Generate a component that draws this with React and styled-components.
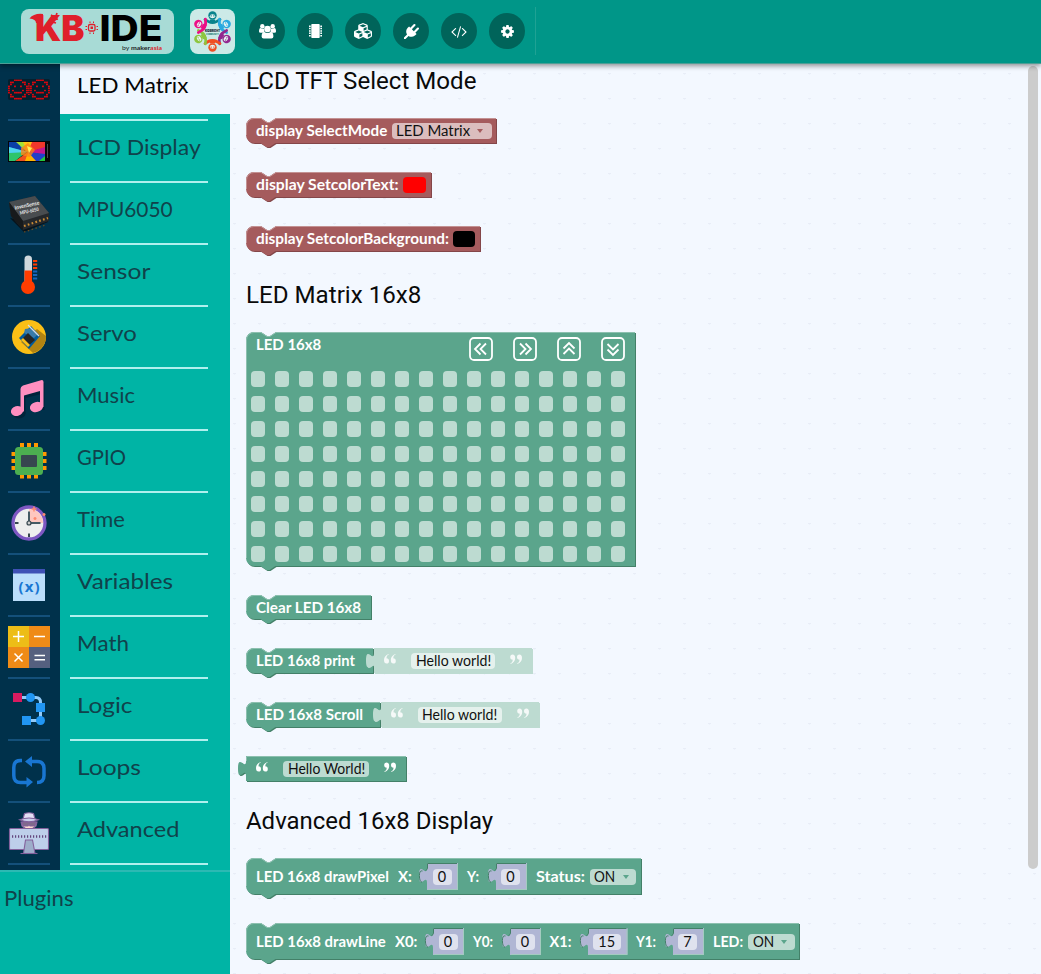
import React, { useLayoutEffect, useRef, useState } from "react";
import styled, { createGlobalStyle } from "styled-components";
import { FaCubes } from "react-icons/fa";

const GlobalStyle = createGlobalStyle`
  html, body { margin: 0; padding: 0; overflow: hidden; background: #f3f8ff; }
  * { box-sizing: border-box; }
`;

const FONT = `Lato, "Open Sans", sans-serif`;

const Page = styled.div`
  display: flex;
  flex-direction: column;
  width: 1041px;
  height: 974px;
  overflow: hidden;
  font-family: ${FONT};
`;

/* ---------- fitted text ---------- */

const FitBox = styled.span`
  display: block;
  flex: none;
  width: ${(p) => p.$w}px;
  white-space: pre;
`;

const FitInner = styled.span`
  display: inline-block;
  transform-origin: 0 50%;
`;

/* Widens or narrows the glyphs so that the text fills exactly w pixels. */
function Fit({ w, children }) {
  const ref = useRef(null);
  const [scale, setScale] = useState(1);
  useLayoutEffect(() => {
    setScale(w / ref.current.offsetWidth);
  }, [w, children]);
  return (
    <FitBox $w={w}>
      <FitInner ref={ref} style={{ transform: `scaleX(${scale})` }}>{children}</FitInner>
    </FitBox>
  );
}

/* ---------- header ---------- */

const Header = styled.header`
  flex: none;
  display: flex;
  align-items: flex-start;
  height: 64px;
  padding: 7px 0 0 21px;
  background: #009688;
  border-bottom: 1px solid #4d9e96;
  box-shadow: 0 2px 5px rgba(0, 0, 0, 0.42);
  position: relative;
  z-index: 2;
`;

const LogoCard = styled.div`
  width: ${(p) => p.$w}px;
  height: 45px;
  margin: 2px ${(p) => p.$gap}px 0 0;
  border-radius: 8px;
  background: rgba(255, 255, 255, ${(p) => p.$alpha});
  svg { display: block; overflow: visible; }
`;

const ToolButton = styled.button`
  display: flex;
  align-items: center;
  justify-content: center;
  width: 36px;
  height: 36px;
  margin: 6px 12px 0 0;
  padding: 0;
  border: 0;
  border-radius: 50%;
  background: #00645a;
  color: #fff;
`;

const HeaderRule = styled.div`
  width: 1px;
  height: 48px;
  margin-left: -2px;
  background: #1fa294;
`;

function BrandLogo() {
  return (
    <svg width="153" height="45" viewBox="21 9 153 45">
      <g fontFamily="Inter, 'Liberation Sans', sans-serif" fontWeight="900" fontSize="36">
        <text x="35" y="40.5" fill="#df1f2b" textLength="49.5" lengthAdjust="spacingAndGlyphs">KB</text>
        <text x="99.500" y="40.5" fill="#000" textLength="63" lengthAdjust="spacingAndGlyphs" fontWeight="800">IDE</text>
      </g>
      <path d="M29.500 18.500Q34 13 43 14v9h-7q0-4-6.500-4.500z" fill="#df1f2b" />
      <g stroke="#df1f2b" fill="none">
        <path d="M51 15l3 2m3-4l-2 6m-3 1l6-1m-6 3l4 1" strokeWidth="1.700" />
        <rect x="88.500" y="24.500" width="6.500" height="6.500" rx="1.500" strokeWidth="1.300" />
        <path d="M90 23v-1.500m3.500 1.500v-1.500M90 32.500v1.500m3.500-1.500v1.500M87 26.500h-1.500m1.500 3h-1.500m11-3h1.500m-1.500 3h1.500" strokeWidth="1" />
      </g>
      <rect x="90.500" y="26.500" width="2.500" height="2.500" fill="#df1f2b" />
      <text x="122" y="49.800" fontFamily="Lato, sans-serif" fontSize="6.400" fill="#222" textLength="40" lengthAdjust="spacingAndGlyphs">
        by <tspan fontWeight="700">maker</tspan><tspan fontWeight="700" fill="#df1f2b">asia</tspan>
      </text>
    </svg>
  );
}

const PEOPLE = [
  [0, "#08838c"],
  [62, "#29a9e0"],
  [118, "#92278f"],
  [180, "#f04e23"],
  [242, "#8dc63f"],
  [298, "#ec0f86"],
];

function CommunityLogo() {
  return (
    <svg width="45" height="45" viewBox="-22.500 -22.500 45 45">
      {PEOPLE.map(([a, c]) => (
        <g key={c} transform={`rotate(${a})`}>
          <path d="M-7.500-12Q0-6 7.500-12" fill="none" stroke={c} strokeWidth="2.800" strokeLinecap="round" />
          <path d="M-2.500-12h5l.5 4h-6z" fill={c} />
          <circle cy="-16" r="4.200" fill={c} />
          <ellipse cy="-15.200" rx="2.700" ry="2" fill="#e6f3f1" />
          <path d="M-2-15.600h1.500m1 0h1.500" stroke={c} strokeWidth="0.900" />
        </g>
      ))}
      <text y="0" textAnchor="middle" fontFamily="Inter, sans-serif" fontWeight="900" fontSize="3.600" textLength="15" lengthAdjust="spacingAndGlyphs" fill="#123">KIDBRIGHT</text>
      <text y="3.600" textAnchor="middle" fontFamily="Inter, sans-serif" fontWeight="700" fontSize="2.400" textLength="13" lengthAdjust="spacingAndGlyphs" fill="#0a6d66">COMMUNITY</text>
    </svg>
  );
}

const UsersIcon = () => (
  <svg width="17" height="15" viewBox="0 0 17 15" fill="#fff">
    <circle cx="3.300" cy="2.300" r="2.200" />
    <circle cx="13.700" cy="2.300" r="2.200" />
    <path d="M0 7.500Q0 4 1.500 4q2 1.200 3.500.4Q4.600 7 6 8.200L4 8.800H1.500Q0 8.800 0 7.500zM17 7.500Q17 4 15.500 4q-2 1.200-3.500.4Q12.400 7 11 8.200l2 .6h2.500Q17 8.800 17 7.500z" />
    <circle cx="8.500" cy="5" r="3.300" />
    <path d="M2.600 12.500Q2.600 8 5.300 8q3.200 2.200 6.400 0 2.700 0 2.700 4.500 0 2-2 2H4.600q-2 0-2-2z" />
  </svg>
);

const ChipIcon = () => (
  <svg width="13" height="14" viewBox="0 0 13 14" fill="#fff">
    <rect x="2.300" width="8.400" height="14" rx="0.800" />
    {[1.4, 3.8, 6.2, 8.6, 11].map((y) => (
      <path key={y} d={`M0 ${y}h1.700v1.500H0zM11.300 ${y}H13v1.500h-1.700z`} />
    ))}
  </svg>
);

const PlugIcon = () => (
  <svg width="15" height="15" viewBox="0 0 1792 1792" fill="#fff">
    <path d="M1755 453q37 38 37 90.500t-37 90.500l-401 400 150 150-160 160q-163 163-389.500 186.500t-411.500-100.500l-362 362h-181v-181l362-362q-124-185-100.500-411.500t186.500-389.500l160-160 150 150 400-401q38-37 91-37t90 37 37 90.500-37 90.500l-400 401 234 234 401-400q38-37 91-37t90 37z" />
  </svg>
);

const CodeIcon = () => (
  <svg width="16" height="15" viewBox="0 0 1920 1792" fill="#fff">
    <path d="M617 1399l-50 50q-10 10-23 10t-23-10l-466-466q-10-10-10-23t10-23l466-466q10-10 23-10t23 10l50 50q10 10 10 23t-10 23l-393 393 393 393q10 10 10 23t-10 23zm591-1067l-373 1291q-4 13-15.500 19.500t-23.500 2.500l-62-17q-13-4-19.500-15.500t-2.500-24.500l373-1291q4-13 15.500-19.500t23.500-2.500l62 17q13 4 19.500 15.500t2.500 24.500zm657 651l-466 466q-10 10-23 10t-23-10l-50-50q-10-10-10-23t10-23l393-393-393-393q-10-10-10-23t10-23l50-50q10-10 23-10t23 10l466 466q10 10 10 23t-10 23z" />
  </svg>
);

const CogIcon = () => (
  <svg width="15" height="15" viewBox="0 0 1792 1792" fill="#fff">
    <path d="M1152 896q0-106-75-181t-181-75-181 75-75 181 75 181 181 75 181-75 75-181zm512-109v222q0 12-8 23t-20 13l-185 28q-19 54-39 91 35 50 107 138 10 12 10 25t-9 23q-27 37-99 108t-94 71q-12 0-26-9l-138-108q-44 23-91 38-16 136-29 186-7 28-36 28h-222q-14 0-24.500-8.500t-11.500-21.500l-28-184q-49-16-90-37l-141 107q-10 9-25 9-14 0-25-11-126-114-165-168-7-10-7-23 0-12 8-23 15-21 51-66.500t54-70.500q-27-50-41-99l-183-27q-13-2-21-12.500t-8-23.500v-222q0-12 8-23t19-13l186-28q14-46 39-92-40-57-107-138-10-12-10-24 0-10 9-23 26-36 98.500-107.500t94.500-71.500q13 0 26 10l138 107q44-23 91-38 16-136 29-186 7-28 36-28h222q14 0 24.500 8.500t11.500 21.500l28 184q49 16 90 37l142-107q9-9 24-9 13 0 25 10 129 119 165 170 7 8 7 22 0 12-8 23-15 21-51 66.500t-54 70.500q26 50 41 98l183 28q13 2 21 12.500t8 23.500z" />
  </svg>
);

/* ---------- sidebar ---------- */

const Body = styled.div`
  flex: 1;
  display: flex;
  min-height: 0;
`;

const Sidebar = styled.nav`
  flex: none;
  width: 230px;
  background: #00b4a5;
`;

const Category = styled.div`
  display: flex;
  height: ${(p) => (p.$first ? 57 : 62)}px;
`;

const RailCell = styled.div`
  flex: none;
  display: flex;
  flex-direction: column;
  justify-content: flex-end;
  width: 60px;
  padding: 0 10px 0 8px;
  background: #00314b;
  &::after { content: ""; height: 2px; background: #14507a; flex: none; }
`;

const RailIcon = styled.div`
  height: 60px;
  flex: none;
  svg { display: block; overflow: visible; }
`;

const LabelCell = styled.div`
  flex: 1;
  display: flex;
  flex-direction: column;
  justify-content: space-between;
  &::after { content: ""; height: 2px; width: 138px; margin-left: 10px; background: #b0f0ee; }
`;

const Label = styled.div`
  height: ${(p) => (p.$on ? 50 : 55)}px;
  padding: ${(p) => (p.$on ? 8 : 13)}px 0 0 16.500px;
  font-size: 21.500px;
  line-height: 27px;
  color: ${(p) => (p.$on ? "#050505" : "#10424b")};
  background: ${(p) => (p.$on ? "#eff7ff" : "transparent")};
`;

const RailEnd = styled.div`
  width: 60px;
  height: 5px;
  background: #00314b;
`;

const Plugins = styled.div`
  border-top: 2px solid #2cb9b3;
  padding: 13px 0 0 4px;
  font-size: 21.500px;
  line-height: 27px;
  color: #10424b;
`;

const FACE = [
  "0001111000",
  "0110000110",
  "0100000010",
  "1001001001",
  "1000000001",
  "1010000101",
  "1001111001",
  "0100000010",
  "0110000110",
  "0001111000",
];

/* Every drawing uses a 42x60 box that ends at the separator line. */
const Pic = ({ children }) => (
  <svg width="42" height="60" viewBox="0 0 42 60">{children}</svg>
);

const ICONS = {
  matrix: (
    <Pic>
      <rect y="20" width="42" height="21" rx="2" fill="#03202f" />
      {[0, 22].map((dx) =>
        FACE.map((row, j) =>
          [...row].map((v, i) =>
            v === "1" ? (
              <rect key={`${dx}-${j}-${i}`} x={dx + 0.1 + i * 2} y={20.400 + j * 2.050} width="1.700" height="1.700" rx="0.500" fill="#f8050b" />
            ) : null
          )
        )
      )}
      <path d="M20.900 24v12" stroke="#f2050b" strokeWidth="1.500" strokeDasharray="1.500 .7" />
    </Pic>
  ),
  lcd: (
    <Pic>
      <rect y="20" width="42" height="21" fill="#050608" />
      <path d="M1 21h12l3 9-8 9H1z" fill="#2389d8" />
      <path d="M1 21l9 0 5 9-14-4z" fill="#0a3fa5" />
      <path d="M8 21h11l0 10z" fill="#a6e034" />
      <path d="M15 21h10l-5 11z" fill="#ffc516" />
      <path d="M24 21h13v6l-17 4z" fill="#f2382b" />
      <path d="M37 26v8L20 31z" fill="#c4168e" />
      <path d="M37 33v7H26l-6-9z" fill="#2140c9" />
      <path d="M28 40H16l4-9z" fill="#ffb400" />
      <path d="M17 40H7l13-9z" fill="#f0521e" />
      <path d="M7 40H1v-8l19-2z" fill="#2ec56a" />
      <path d="M1 32v-6l19 5z" fill="#4fd5ed" />
      <path d="M31 40h6v-5z" fill="#24c83c" />
      <path d="M13 27l7-5 7 7-5 7-9-2z" fill="#ff8418" opacity=".8" />
      <path d="M19 25l5 2-3 5z" fill="#fff05a" />
      <path d="M39.500 23v14" stroke="#555" strokeWidth="0.900" />
    </Pic>
  ),
  mpu: (
    <Pic>
      <path d="M2 35l14 14 24-10v-5L14 38z" fill="#07131b" />
      <path d="M1 19L27 13 41 30v8L15 47 3 33z" fill="#25282b" />
      <path d="M1 19L27 13 41 30 15 38z" fill="#494d50" />
      <path d="M1 19l14 19v9L3 33z" fill="#171a1c" />
      <path d="M16 43l24-8" stroke="#c98a35" strokeWidth="2.200" strokeDasharray="1.700 2.300" />
      <path d="M16 49l22-7" stroke="#6b4c22" strokeWidth="1.300" strokeDasharray="1.500 2.500" />
      <g fontFamily="Lato, sans-serif" fontWeight="700" fill="#ededed" transform="rotate(-12 20 25)">
        <text x="7" y="24" fontSize="5.500" textLength="25" lengthAdjust="spacingAndGlyphs">InvenSense</text>
        <text x="11" y="30" fontSize="5" textLength="19" lengthAdjust="spacingAndGlyphs">MPU-6050</text>
      </g>
    </Pic>
  ),
  sensor: (
    <Pic>
      <g transform="translate(0 -2)">
        <rect x="16.500" y="12.500" width="7.500" height="32" rx="3.750" fill="#cfd8dc" />
        <path d="M16.500 27.500H24V40h-7.500z" fill="#ff3d00" />
        <circle cx="20" cy="44" r="7" fill="#ff3d00" />
        <path d="M25 18h4.200M25 21.500h4.200M25 25h4.200" stroke="#ff3d00" strokeWidth="2" />
        <path d="M25 28.500h4.200M25 32h4.200M25 35.500h4.200" stroke="#1565c0" strokeWidth="2" />
      </g>
    </Pic>
  ),
  servo: (
    <Pic>
      <g transform="translate(0 -2)">
        <circle cx="21" cy="32" r="17" fill="#fbbf16" />
        <path d="M29 24l9 7a17 17 0 0 1-13 17L13 37z" fill="#b28412" />
        <path d="M11 33l12-12 9 10-11 13z" fill="#015a9b" />
        <path d="M17 24l7-1 6 6-4 4-10-5z" fill="#397ba9" />
        <path d="M14 34l6-6 7 7-7 6z" fill="#252525" />
        <path d="M14 34l7 7" fill="none" stroke="#fbbf16" strokeWidth="2.800" />
        <path d="M20 20l11 11" stroke="#ddd" strokeWidth="1.300" />
      </g>
    </Pic>
  ),
  music: (
    <Pic>
      <g transform="translate(1.500 2)" fill="#001d33" opacity=".65">
        <ellipse cx="9.500" cy="42.500" rx="6.500" ry="5" />
        <path d="M13 19Q14 15 35 12v27h-3V23l-16 4v16h-3z" />
      </g>
      <g fill="#ff8fc0">
        <ellipse cx="9" cy="42" rx="6.200" ry="4.900" transform="rotate(-15 9 42)" />
        <ellipse cx="28.500" cy="38" rx="6.700" ry="5" transform="rotate(-15 28.500 38)" />
        <path d="M12.500 42.500V20q0-2.500 2.500-3.500l18-5.300q2.500-.5 2.500 1.800v25h-3.500V22L16 26.500V42.500z" />
      </g>
    </Pic>
  ),
  gpio: (
    <Pic>
      <g transform="translate(0 -2)">
        <g fill="#ff9800">
          {[12, 19, 26].map((x) => <path key={x} d={`M${x} 14h4v5h-4zM${x} 44h4v5.500h-4z`} />)}
          {[23, 30, 37].map((y) => <path key={y} d={`M3.500 ${y}h5v4h-5zM34 ${y}h4.500v4H34z`} />)}
        </g>
        <rect x="7" y="18" width="28" height="28" rx="3.500" fill="#4caf50" />
        <rect x="13" y="26" width="16" height="12" rx="1" fill="#37474f" />
      </g>
    </Pic>
  ),
  time: (
    <Pic>
      <g transform="translate(0 -2)">
        <circle cx="21" cy="32" r="16" fill="#eee" stroke="#7e57c2" strokeWidth="3.300" />
        <path d="M21 18v14h14A14 14 0 0 0 21 18z" fill="#ffc7bf" />
        <path d="M21 20.500V32h11.500" fill="none" stroke="#455a64" strokeWidth="2" />
        <path d="M7 32h3.500M21 42.500V46" stroke="#37474f" strokeWidth="2" />
        <circle cx="21" cy="32" r="2" fill="#ccc" stroke="#37474f" strokeWidth="1.200" />
        <path d="M26 15.500v5m-2.500-2.500h5M27 26v3m-1.500-1.500h3M36 22v3m-1.500-1.500h3" stroke="#ff8a70" strokeWidth="1.500" />
      </g>
    </Pic>
  ),
  vars: (
    <Pic>
      <g transform="translate(0 -2)">
        <rect x="5" y="16" width="32" height="32" fill="#bbdefb" />
        <path d="M5 16h32v4.500H5z" fill="#3f51b5" />
        <text x="21" y="38.500" textAnchor="middle" fontFamily="'Open Sans', sans-serif" fontWeight="700" fontSize="15" textLength="21" lengthAdjust="spacing" fill="#1976d2">(x)</text>
      </g>
    </Pic>
  ),
  math: (
    <Pic>
      <path d="M0 9h21v21H0z" fill="#edbd17" />
      <path d="M21 9h21v21H21zM0 30h21v21H0z" fill="#ef8b17" />
      <path d="M21 30h21v21H21z" fill="#55607f" />
      <path d="M5 19.500h11M10.500 14v11M26 19.500h11M6.500 36.500l8 8m0-8l-8 8M26.500 38.500h10.500m-10.500 4.300h10.500" stroke="#fff" strokeWidth="1.500" />
    </Pic>
  ),
  logic: (
    <Pic>
      <path d="M10 18.500h18q4.500 0 4.500 5v18H18" fill="none" stroke="#90caf9" strokeWidth="3" />
      <path d="M5 14h9v9H5z" fill="#d81b60" />
      <circle cx="22.500" cy="18.500" r="4.500" fill="#2196f3" />
      <circle cx="32.500" cy="41.500" r="4.500" fill="#2196f3" />
      <path d="M28 24h9v9h-9zM14 37h9v9h-9z" fill="#2196f3" />
    </Pic>
  ),
  loops: (
    <Pic>
      <path d="M14 19.500h-1.500q-6.700 0-6.700 7v8q0 7 6.700 7H20M22 20.500h7q7 0 7 7v7q0 7-7 7" fill="none" stroke="#1976d2" strokeWidth="3.500" />
      <path d="M24 15v11l-7-5.500zM18.500 36v10.500L25 41z" fill="#1976d2" />
    </Pic>
  ),
  advanced: (
    <Pic>
      <g stroke="#83619c" strokeWidth="1.100">
        <path d="M13 19h16l-1 4q-7 7-14 0z" fill="#ffdccf" />
        <path d="M14 19h14l-1 4h-5l-1-1.500-1 1.500h-5z" fill="#806a8c" />
        <path d="M16.500 10.500q4.500-1.500 9 0l1.500 5.500H15z" fill="#e4dff5" />
        <path d="M11.500 16.800q9.500-3.500 19 0-9.500 4-19 0z" fill="#cbd0ec" />
        <rect x="1.500" y="25.500" width="39" height="21" rx="1" fill="#becfea" />
        <path d="M17.500 37h7l2.500 13.500H15.500z" fill="#9eadca" />
        <path d="M12.500 50.500h17" />
      </g>
      <path d="M4 33.500h35" stroke="#63467c" strokeWidth="2.400" strokeDasharray="1.200 1.800" />
    </Pic>
  ),
};

const CATEGORIES = [
  ["matrix", "LED Matrix", 111.5],
  ["lcd", "LCD Display", 124],
  ["mpu", "MPU6050", 96],
  ["sensor", "Sensor", 73],
  ["servo", "Servo", 60],
  ["music", "Music", 58.500],
  ["gpio", "GPIO", 49],
  ["time", "Time", 48],
  ["vars", "Variables", 96],
  ["math", "Math", 52],
  ["logic", "Logic", 55.500],
  ["loops", "Loops", 64],
  ["advanced", "Advanced", 102],
];

/* ---------- workspace ---------- */

const Workspace = styled.main`
  flex: 1;
  display: flex;
  justify-content: space-between;
  padding: 0 3px 0 16px;
  background-color: #f3f8ff;
  background-image: radial-gradient(ellipse 2px 1.100px at 4.500px 9.600px, #e8edf7 0, #e8edf7 60%, transparent 100%);
  background-size: 25px 25px;
`;

const Flyout = styled.div`
  display: flex;
  flex-direction: column;
  align-items: flex-start;
`;

const ScrollThumb = styled.div`
  width: 10px;
  height: 803px;
  margin-top: 2px;
  border-radius: 5px;
  background: #ccc;
`;

const Heading = styled.h2`
  margin: ${(p) => p.$mt}px 0 0;
  height: 28px;
  font: 400 24px/28px Roboto, sans-serif;
  color: #0a0a0a;
`;

const TONES = {
  red: { fill: "#a55b5d", light: "#c39293", dark: "#844649", soft: "#dbbdbe" },
  green: { fill: "#5ba58c", light: "#8cc0af", dark: "#438068", soft: "#bddbd1" },
  ghost: { fill: "#bddbd1", light: "#bddbd1", dark: "#bddbd1", soft: "#e5f1ed" },
};

const BlockBox = styled.div`
  position: relative;
  flex: none;
  display: flex;
  align-items: ${(p) => (p.$top ? "flex-start" : "center")};
  width: ${(p) => p.$w}px;
  height: ${(p) => p.$h}px;
  margin-top: ${(p) => p.$mt || 0}px;
  margin-left: ${(p) => p.$ml || 0}px;
  padding-left: ${(p) => p.$pad}px;
`;

const Shape = styled.svg`
  position: absolute;
  left: 0;
  top: 0;
  overflow: visible;
`;

const stackPath = (w, h) =>
  `M0 8A8 8 0 0 1 8 0H15l6 4h3l6-4H${w}V${h}H29.500l-6 4h-3l-6-4H8A8 8 0 0 1 0 ${h - 8}z`;
const valuePath = (w, h) => `M0 0H${w}V${h}H0V20c0-10-8 8-8-7.500s8 2.500 8-7.500z`;

function Block({ tone = "green", kind = "stack", w, h = 26, mt, ml, pad = 9.5, top, children }) {
  const t = TONES[tone];
  const d = kind === "stack" ? stackPath(w - 1, h - 1) : valuePath(w - 1, h - 1);
  const edge =
    kind === "stack"
      ? `M.5 ${h - 9}V8A7.500 7.500 0 0 1 8 .5H15l6 4h3l6-4H${w - 1}`
      : `M.5 5V.5H${w - 1}`;
  return (
    <BlockBox $w={w} $h={h} $mt={mt} $ml={ml} $pad={pad} $top={top}>
      <Shape width={w} height={h}>
        <path d={d} fill={t.dark} transform="translate(1 1)" />
        <path d={d} fill={t.fill} />
        <path d={edge} fill="none" stroke={t.light} strokeWidth="1" />
      </Shape>
      {children}
    </BlockBox>
  );
}

const BlockText = styled.div`
  position: relative;
  flex: none;
  margin-left: ${(p) => p.$ml || 0}px;
  font-size: 14.500px;
  line-height: 18px;
  font-weight: 700;
  color: #fff;
`;

const T = ({ w, ml, children }) => (
  <BlockText $ml={ml}><Fit w={w}>{children}</Fit></BlockText>
);

const Field = styled.div`
  position: relative;
  flex: none;
  display: flex;
  align-items: center;
  justify-content: ${(p) => (p.$center ? "center" : "flex-start")};
  width: ${(p) => p.$w}px;
  height: 16px;
  margin-left: ${(p) => p.$ml || 0}px;
  padding: 0 ${(p) => (p.$center ? 0 : 4.500)}px;
  border-radius: 4px;
  background: ${(p) => p.$bg};
  font-size: 14.500px;
  line-height: 16px;
  color: #111;
`;

const Caret = styled.span`
  margin-left: 7px;
  border: 3.500px solid transparent;
  border-top: 4.500px solid ${(p) => p.$c};
  border-bottom: 0;
`;

const Select = ({ tone = "green", w, tw, ml, children }) => (
  <Field $w={w} $ml={ml} $bg={TONES[tone].soft}>
    <Fit w={tw}>{children}</Fit>
    <Caret $c={TONES[tone].fill} />
  </Field>
);

const QuoteSvg = styled.svg`
  position: relative;
  flex: none;
  margin-left: ${(p) => p.$ml || 0}px;
  margin-top: -5px;
  transform: ${(p) => (p.$close ? "rotate(180deg)" : "none")};
`;

const Quote = ({ ml, close, soft }) => (
  <QuoteSvg $ml={ml} $close={close} width="12" height="10" viewBox="0 0 12 10" fill="#fff" opacity={soft ? 0.85 : 1}>
    <path d="M5 .3Q2.300 1.500 2.400 4.300 5 4.300 5 7q0 2.600-2.400 2.600Q0 9.600 0 6 0 1.800 4.600 0zM11.800.3Q9.100 1.500 9.200 4.300q2.600 0 2.600 2.700 0 2.600-2.400 2.600Q6.800 9.600 6.800 6q0-4.200 4.600-6z" />
  </QuoteSvg>
);

const StringParts = ({ tone, w, tw, children, soft }) => (
  <>
    <Quote soft={soft} />
    <Field $w={w} $ml={15} $bg={TONES[tone].soft}><Fit w={tw}>{children}</Fit></Field>
    <Quote ml={15} close soft={soft} />
  </>
);

const NumBox = styled.div`
  position: relative;
  flex: none;
  display: flex;
  align-items: center;
  width: ${(p) => p.$w}px;
  height: 27px;
  margin-left: ${(p) => p.$ml}px;
`;

function Num({ w = 31, ml, children }) {
  return (
    <NumBox $w={w} $ml={ml}>
      <Shape width={w} height="27">
        <path d={valuePath(w, 27)} fill="#b0b6d4" />
        <path d={`M-5 19.300Q-7.600 18.500-7.600 12.500-7.600 7-4.500 8M-1.500 7.500Q.3 7 .5 5V.5H${w - 1}`} fill="none" stroke="#438068" strokeWidth="1" />
        <path d={`M${w - .5} 1V26.500H1`} fill="none" stroke="#a4cbc0" strokeWidth="1" />
      </Shape>
      <Field $w={w - 12} $ml={5.5} $center $bg="#dfe2ee">{children}</Field>
    </NumBox>
  );
}

const Swatch = styled.div`
  position: relative;
  width: 22.500px;
  height: 16px;
  margin-left: ${(p) => p.$ml}px;
  border-radius: 4px;
  background: ${(p) => p.$c};
`;

const MatrixBody = styled.div`
  position: relative;
  display: flex;
  flex-direction: column;
  gap: 10px;
`;

const MatrixHead = styled.div`
  display: flex;
  align-items: flex-start;
  height: 29px;
  padding-left: 4.500px;
`;

const ShiftButtons = styled.div`
  display: flex;
  gap: 20px;
  margin: 5px 0 0 148.500px;
  svg { display: block; }
`;

const CellGrid = styled.div`
  display: grid;
  grid-template-columns: repeat(16, 14px);
  grid-auto-rows: 16px;
  gap: 9px 10px;
`;

const Cell = styled.div`
  border-radius: 4px;
  background: #bddbd1;
`;

const MatrixTitle = styled.div`
  margin-top: 4px;
`;

const Shift = ({ angle }) => (
  <svg width="24" height="24" viewBox="0 0 24 24" fill="none" stroke="#fff">
    <rect x="1" y="1" width="22" height="22" rx="4" strokeWidth="1.800" />
    <path d="M11.500 6.500L6 12l5.500 5.500M17 6.500L11.500 12l5.500 5.500" strokeWidth="1.800" transform={`rotate(${angle} 12 12)`} />
  </svg>
);

export default function App() {
  return (
    <Page>
      <GlobalStyle />
      <Header>
        <LogoCard $w={153} $gap={16} $alpha={0.66}><BrandLogo /></LogoCard>
        <LogoCard $w={45} $gap={14} $alpha={0.8}><CommunityLogo /></LogoCard>
        <ToolButton><UsersIcon /></ToolButton>
        <ToolButton><ChipIcon /></ToolButton>
        <ToolButton><FaCubes size={18} /></ToolButton>
        <ToolButton><PlugIcon /></ToolButton>
        <ToolButton><CodeIcon /></ToolButton>
        <ToolButton><CogIcon /></ToolButton>
        <HeaderRule />
      </Header>
      <Body>
        <Sidebar>
          {CATEGORIES.map(([icon, name, w], i) => (
            <Category key={name} $first={i === 0}>
              <RailCell><RailIcon>{ICONS[icon]}</RailIcon></RailCell>
              <LabelCell><Label $on={i === 0}><Fit w={w}>{name}</Fit></Label></LabelCell>
            </Category>
          ))}
          <RailEnd />
          <Plugins><Fit w={70}>Plugins</Fit></Plugins>
        </Sidebar>
        <Workspace>
          <Flyout>
            <Heading $mt={3}><Fit w={230}>LCD TFT Select Mode</Fit></Heading>
            <Block tone="red" w={251} mt={23}>
              <T w={131}>display SelectMode</T>
              <Select tone="red" w={100} tw={74} ml={5}>LED Matrix</Select>
            </Block>
            <Block tone="red" w={186} mt={28}>
              <T w={143}>display SetcolorText:</T>
              <Swatch $ml={4.500} $c="#ff0000" />
            </Block>
            <Block tone="red" w={235} mt={28}>
              <T w={192.500}>display SetcolorBackground:</T>
              <Swatch $ml={4.500} $c="#000" />
            </Block>
            <Heading $mt={29}><Fit w={175}>LED Matrix 16x8</Fit></Heading>
            <Block w={390} h={235} mt={23} pad={5} top>
              <MatrixBody>
                <MatrixHead>
                  <MatrixTitle><T w={65}>LED 16x8</T></MatrixTitle>
                  <ShiftButtons>
                    <Shift angle={0} /><Shift angle={180} /><Shift angle={90} /><Shift angle={270} />
                  </ShiftButtons>
                </MatrixHead>
                <CellGrid>
                  {Array.from({ length: 128 }, (_, i) => <Cell key={i} />)}
                </CellGrid>
              </MatrixBody>
            </Block>
            <Block w={126} h={25} mt={28}><T w={105}>Clear LED 16x8</T></Block>
            <Block w={128} mt={28}>
              <T w={99.500}>LED 16x8 print</T>
              <Block kind="value" tone="ghost" w={159} ml={19} pad={10}>
                <StringParts tone="ghost" w={84} tw={75} soft>Hello world!</StringParts>
              </Block>
            </Block>
            <Block w={135} mt={28}>
              <T w={106.500}>LED 16x8 Scroll</T>
              <Block kind="value" tone="ghost" w={159} ml={18.500} pad={10}>
                <StringParts tone="ghost" w={84} tw={75} soft>Hello world!</StringParts>
              </Block>
            </Block>
            <Block kind="value" w={161} mt={28} pad={10}>
              <StringParts tone="green" w={86} tw={77}>Hello World!</StringParts>
            </Block>
            <Heading $mt={25}><Fit w={247.500}>Advanced 16x8 Display</Fit></Heading>
            <Block w={396} h={37} mt={23}>
              <T w={132.500}>LED 16x8 drawPixel</T>
              <T w={13.500} ml={9.500}>X:</T>
              <Num ml={16}>0</Num>
              <T w={12.500} ml={9}>Y:</T>
              <Num ml={16}>0</Num>
              <T w={49} ml={9}>Status:</T>
              <Select w={46.500} tw={21.500} ml={5}>ON</Select>
            </Block>
            <Block w={554} h={37} mt={28}>
              <T w={129.500}>LED 16x8 drawLine</T>
              <T w={22.500} ml={9.500}>X0:</T>
              <Num ml={16}>0</Num>
              <T w={20.500} ml={9}>Y0:</T>
              <Num ml={16.500}>0</Num>
              <T w={22} ml={8.500}>X1:</T>
              <Num ml={16} w={39.500}>15</Num>
              <T w={20.500} ml={9}>Y1:</T>
              <Num ml={16}>7</Num>
              <T w={30.500} ml={9}>LED:</T>
              <Select w={46.500} tw={21.500} ml={5}>ON</Select>
            </Block>
          </Flyout>
          <ScrollThumb />
        </Workspace>
      </Body>
    </Page>
  );
}
